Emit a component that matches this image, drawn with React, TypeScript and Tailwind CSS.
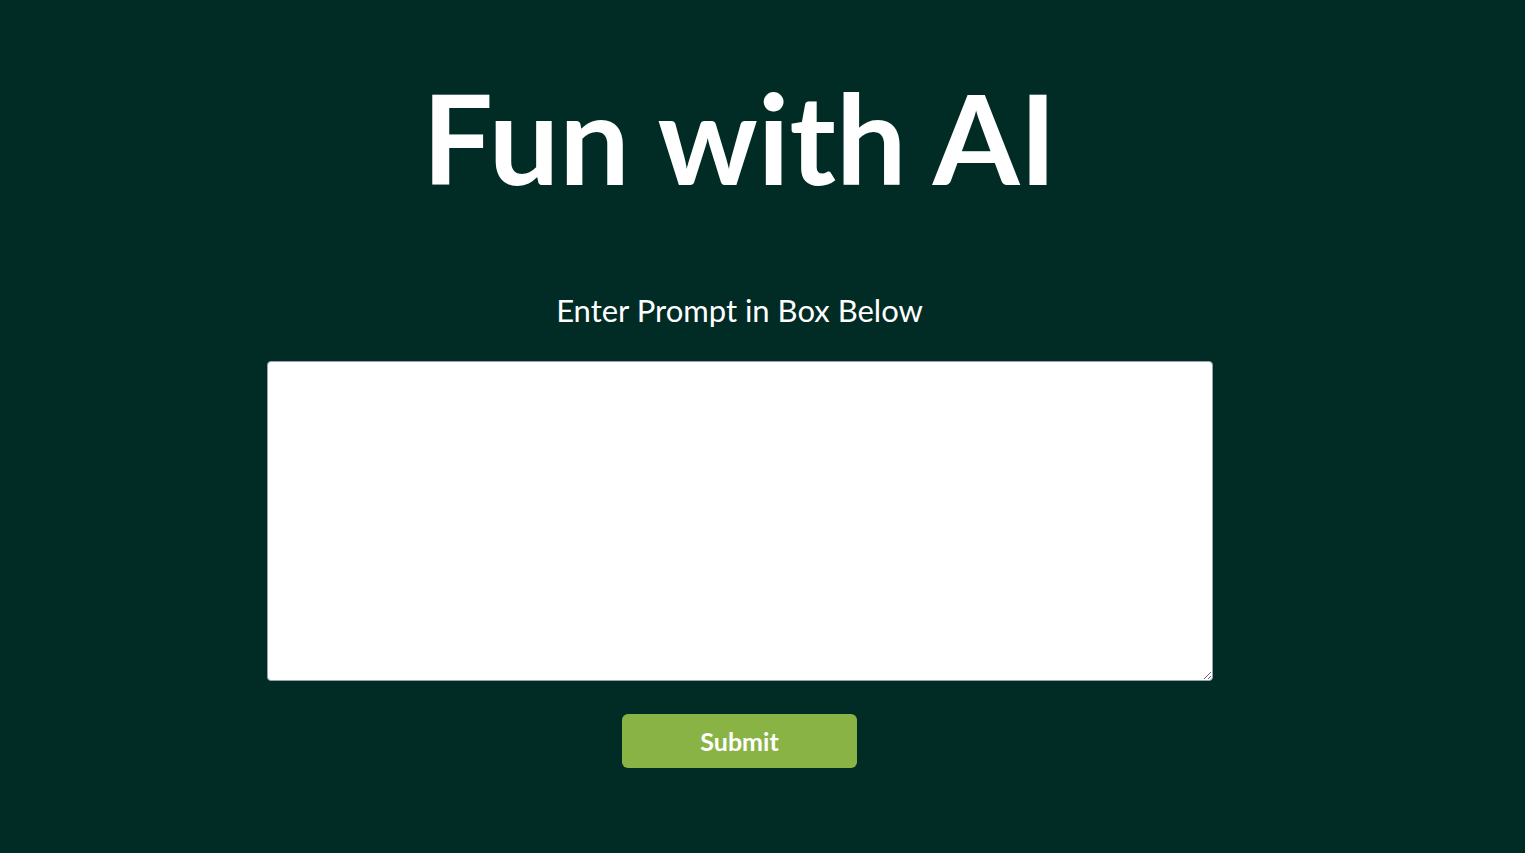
export default function App() {
  return (
    <div className="min-h-[853px] w-full bg-[#012b25] font-['Lato',sans-serif] text-white">
      <div className="flex w-[1479px] flex-col items-center">
        <h1 className="mt-[62px] text-[125px] font-bold leading-[1.2]">Fun with AI</h1>
        <p className="mt-[80px] text-[31px] leading-[1.2]">Enter Prompt in Box Below</p>
        <textarea className="mt-[32px] h-[320px] w-[946px] rounded-sm border border-gray-400 bg-white p-2 text-black" />
        <button className="mt-[33px] h-[54px] w-[235px] rounded-md bg-[#89b445] pt-[2px] text-[25px] font-bold text-white">
          Submit
        </button>
      </div>
    </div>
  );
}
